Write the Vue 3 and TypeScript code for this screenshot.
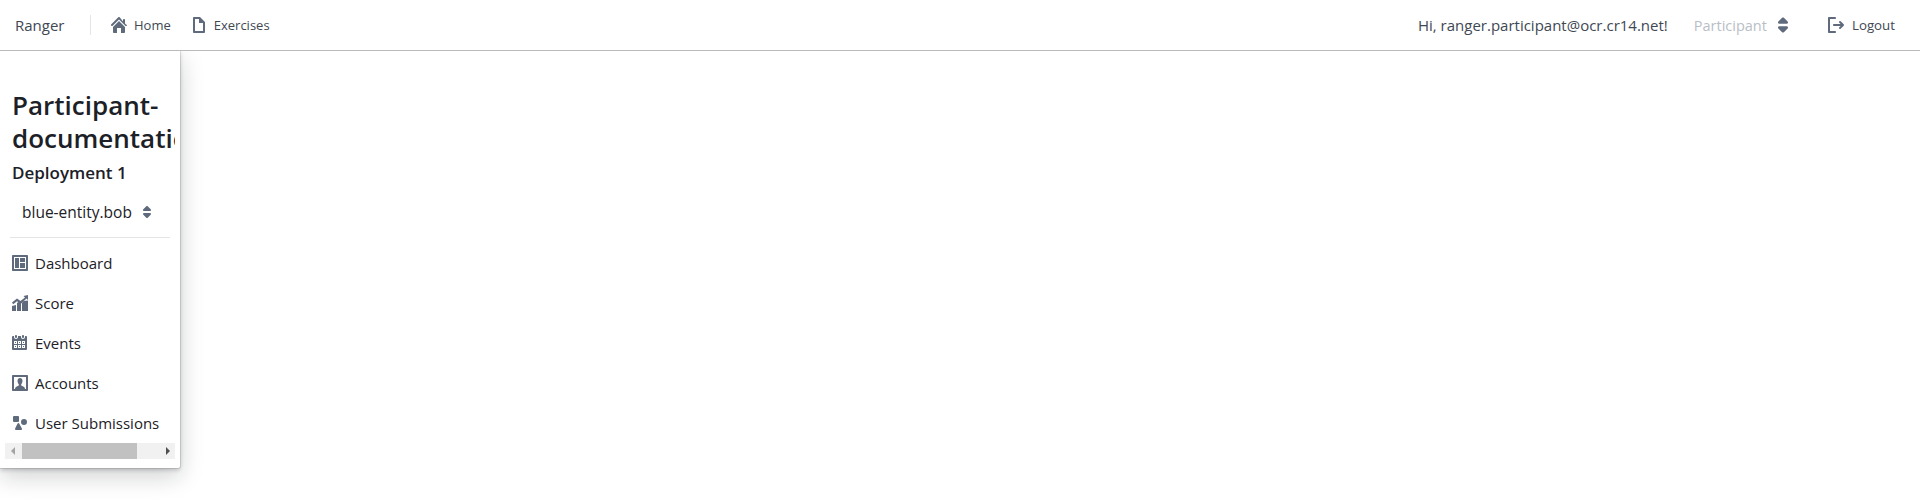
<template>
  <div class="page">
    <nav class="navbar">
      <div class="nav-group">
        <span class="brand">Ranger</span>
        <span class="divider"></span>
        <button v-for="item in navLinks" :key="item.label" class="nav-btn">
          <svg class="icon" viewBox="0 0 16 16"><path :d="item.icon" /></svg>
          <span>{{ item.label }}</span>
        </button>
      </div>
      <div class="nav-group">
        <span class="greeting">Hi, ranger.participant@ocr.cr14.net!</span>
        <div class="role">
          <span>Participant</span>
          <svg class="icon large" viewBox="0 0 16 16"><path :d="caret" /></svg>
        </div>
        <button class="nav-btn logout">
          <svg class="icon" viewBox="0 0 16 16"><path :d="logout" /></svg>
          <span>Logout</span>
        </button>
      </div>
    </nav>

    <aside class="sidebar">
      <div class="sidebar-scroll">
        <h2 class="title">Participant-documentation</h2>
        <h4 class="deployment">Deployment 1</h4>
        <div class="entity">
          <span>blue-entity.bob</span>
          <svg class="icon" viewBox="0 0 16 16"><path :d="caret" /></svg>
        </div>
        <ul class="menu">
          <li v-for="item in menu" :key="item.label" class="menu-item">
            <svg class="icon" viewBox="0 0 16 16"><path :d="item.icon" /></svg>
            <span>{{ item.label }}</span>
          </li>
        </ul>
      </div>
      <div class="scrollbar">
        <span class="arrow left"></span>
        <div class="track"><div class="thumb"></div></div>
        <span class="arrow right"></span>
      </div>
    </aside>
  </div>
</template>

<script setup lang="ts">
const caret =
  'M5 7h6a1.003 1.003 0 00.71-1.71l-3-3C8.53 2.11 8.28 2 8 2s-.53.11-.71.29l-3 3A1.003 1.003 0 005 7zm6 2H5a1.003 1.003 0 00-.71 1.71l3 3c.18.18.43.29.71.29s.53-.11.71-.29l3-3A1.003 1.003 0 0011 9z'
const logout =
  'M7 14H2V2h5c.55 0 1-.45 1-1s-.45-1-1-1H1C.45 0 0 .45 0 1v14c0 .55.45 1 1 1h6c.55 0 1-.45 1-1s-.45-1-1-1zm8.71-6.71l-3-3a1.003 1.003 0 00-1.42 1.42L12.59 7H6c-.55 0-1 .45-1 1s.45 1 1 1h6.59l-1.29 1.29c-.19.18-.3.43-.3.71a1.003 1.003 0 001.71.71l3-3c.18-.18.29-.43.29-.71 0-.28-.11-.53-.29-.71z'

const navLinks = [
  {
    label: 'Home',
    icon: 'M2 10v5c0 .55.45 1 1 1h3v-5h4v5h3c.55 0 1-.45 1-1v-5L8 4l-6 6zm13.71-1.71L14 6.59V3c0-.55-.45-1-1-1s-1 .45-1 1v1.59L8.71.29C8.53.11 8.28 0 8 0s-.53.11-.71.29l-7 7a1.003 1.003 0 001.42 1.42L8 2.41l6.29 6.29c.18.19.43.3.71.3a1.003 1.003 0 00.71-1.71z',
  },
  {
    label: 'Exercises',
    icon: 'M9 0H3c-.55 0-1 .45-1 1v14c0 .55.45 1 1 1h10c.55 0 1-.45 1-1V5l-5-5zm3 14H4V2h4v4h4v8z',
  },
]

const menu = [
  {
    label: 'Dashboard',
    icon: 'M13 8H8v5h5V8zm0-5H8v4h5V3zm2-3H1C.4 0 0 .4 0 1v14c0 .6.4 1 1 1h14c.6 0 1-.4 1-1V1c0-.6-.4-1-1-1zm-1 14H2V2h12v12zM7 3H3v10h4V3z',
  },
  {
    label: 'Score',
    icon: 'M0 16v-5l4-1v6zM5 16V8l1.500-1L9 8.500V16zM10 16V8l2-2 4-.5V16zM0 7.500l5-4 3.500 2.500L13 2.500 11.500 1 16 0v5l-1.500-1.500L8.700 9 5 6.200 1.200 9.300z',
  },
  {
    label: 'Events',
    icon: 'M8 11H7v1h1v-1zm-4 0H3v1h1v-1zm7-8c.6 0 1-.5 1-1V1c0-.5-.4-1-1-1s-1 .5-1 1v1c0 .5.5 1 1 1zM4 3c.5 0 1-.5 1-1V1c0-.5-.5-1-1-1S3 .5 3 1v1c0 .5.5 1 1 1zm10-2h-1v1c0 1.100-.9 2-2 2s-2-.9-2-2V1H6v1c0 1.100-.9 2-2 2s-2-.9-2-2V1H1c-.5 0-1 .5-1 1v12c0 .5.5 1 1 1h13c.5 0 1-.5 1-1V2c0-.5-.5-1-1-1zM5 13H2v-3h3v3zm0-4H2V6h3v3zm4 4H6v-3h3v3zm0-4H6V6h3v3zm4 4h-3v-3h3v3zm0-4h-3V6h3v3zm-1-2h-1v1h1V7zM8 7H7v1h1V7zm4 4h-1v1h1v-1zM4 7H3v1h1V7z',
  },
  {
    label: 'Accounts',
    icon: 'M15 0H1C.45 0 0 .45 0 1v14c0 .55.45 1 1 1h14c.55 0 1-.45 1-1V1c0-.55-.45-1-1-1zm-1 14H2V2h12v12zM3 14c.2-1 .4-1.800 1.200-2.300.8-.5 2.400-.8 2.600-1.500.1-.4 0-.8-.2-1.100C6 8.300 5.500 7 5.500 6c0-1.700 1-3 2.500-3s2.500 1.300 2.500 3c0 1-.5 2.300-1.100 3.100-.2.3-.3.7-.2 1.100.2.7 1.800 1 2.600 1.500.8.5 1 1.300 1.200 2.300z',
  },
  {
    label: 'User Submissions',
    icon: 'M5.92 8.139c.44-.282 1.006-.121 1.264.358l2.689 4.988c.083.155.127.33.127.51C10 14.55 9.587 15 9.077 15H3.924a.864.864 0 01-.438-.12c-.449-.263-.617-.873-.376-1.362l2.465-4.989c.08-.162.2-.297.346-.39zM12 4a3 3 0 110 6 3 3 0 010-6zM6 1a1 1 0 011 1v4a1 1 0 01-1 1H2a1 1 0 01-1-1V2a1 1 0 011-1h4z',
  },
]
</script>

<style>
html,
body {
  background: #fff;
}
</style>

<style scoped>
.page {
  width: 1920px;
  height: 500px;
  overflow: hidden;
  font-family: 'Open Sans', 'Noto Sans', sans-serif;
  font-size: 15px;
  color: #1c2127;
  background: #fff;
}

.icon {
  display: block;
  width: 16px;
  height: 16px;
  flex: none;
  fill: #5f6b7c;
}

.icon.large {
  width: 20px;
  height: 20px;
}

.navbar {
  position: relative;
  z-index: 1;
  display: flex;
  justify-content: space-between;
  align-items: center;
  box-sizing: border-box;
  height: 51px;
  padding: 0 15px;
  border-bottom: 1px solid #b8babc;
  background: #fff;
  color: #404854;
}

.nav-group {
  display: flex;
  align-items: center;
}

.brand {
  width: 75px;
  font-size: 15px;
}

.divider {
  width: 1px;
  height: 20px;
  margin-right: 10px;
  background: #e3e5e7;
}

.nav-btn {
  display: flex;
  align-items: center;
  gap: 7px;
  height: 30px;
  padding: 0 10px;
  border: 0;
  background: none;
  font: inherit;
  font-size: 13px;
  color: inherit;
}

.nav-btn.logout {
  gap: 8px;
  font-size: 13.3px;
}

.greeting {
  margin-right: 26px;
}

.role {
  display: flex;
  align-items: center;
  gap: 6px;
  font-size: 14.5px;
  color: #b9bec6;
  margin-right: 25px;
}

.sidebar {
  box-sizing: border-box;
  width: 180px;
  height: 417px;
  padding: 0 5px;
  background: #fff;
  border-radius: 0 0 2px 0;
  box-shadow: 0 0 0 1px rgba(17, 20, 24, 0.1), 0 2px 4px rgba(17, 20, 24, 0.2), 0 8px 24px rgba(17, 20, 24, 0.2);
}

.sidebar-scroll {
  box-sizing: border-box;
  height: 392px;
  padding: 38px 0 0 7px;
  overflow: hidden;
}

.title {
  width: 163px;
  margin: 0;
  font-size: 26px;
  font-weight: 600;
  line-height: 33px;
  overflow: hidden;
}

.deployment {
  margin: 7px 0 0;
  font-size: 17px;
  font-weight: 600;
  line-height: 21px;
}

.entity {
  display: flex;
  align-items: center;
  justify-content: space-between;
  width: 133px;
  height: 22px;
  margin: 18px 0 0 10px;
  font-size: 15.5px;
}

.menu {
  list-style: none;
  width: 160px;
  margin: 14px 0 0 -2px;
  padding: 5px 0 0;
  border-top: 1px solid #e3e5e7;
}

.menu-item {
  display: flex;
  align-items: center;
  gap: 7px;
  height: 40px;
  padding-left: 2px;
  font-size: 15px;
  white-space: nowrap;
}

.scrollbar {
  display: flex;
  align-items: center;
  width: 170px;
  height: 16px;
  background: #f1f1f1;
}

.arrow {
  width: 0;
  height: 0;
  border-top: 4px solid transparent;
  border-bottom: 4px solid transparent;
}

.arrow.left {
  margin: 0 7px 0 6px;
  border-right: 4px solid #a3a3a3;
}

.arrow.right {
  margin: 0 5px 0 6px;
  border-left: 4px solid #505050;
}

.track {
  flex: 1;
  height: 100%;
}

.thumb {
  width: 115px;
  height: 100%;
  background: #c1c1c1;
}
</style>
